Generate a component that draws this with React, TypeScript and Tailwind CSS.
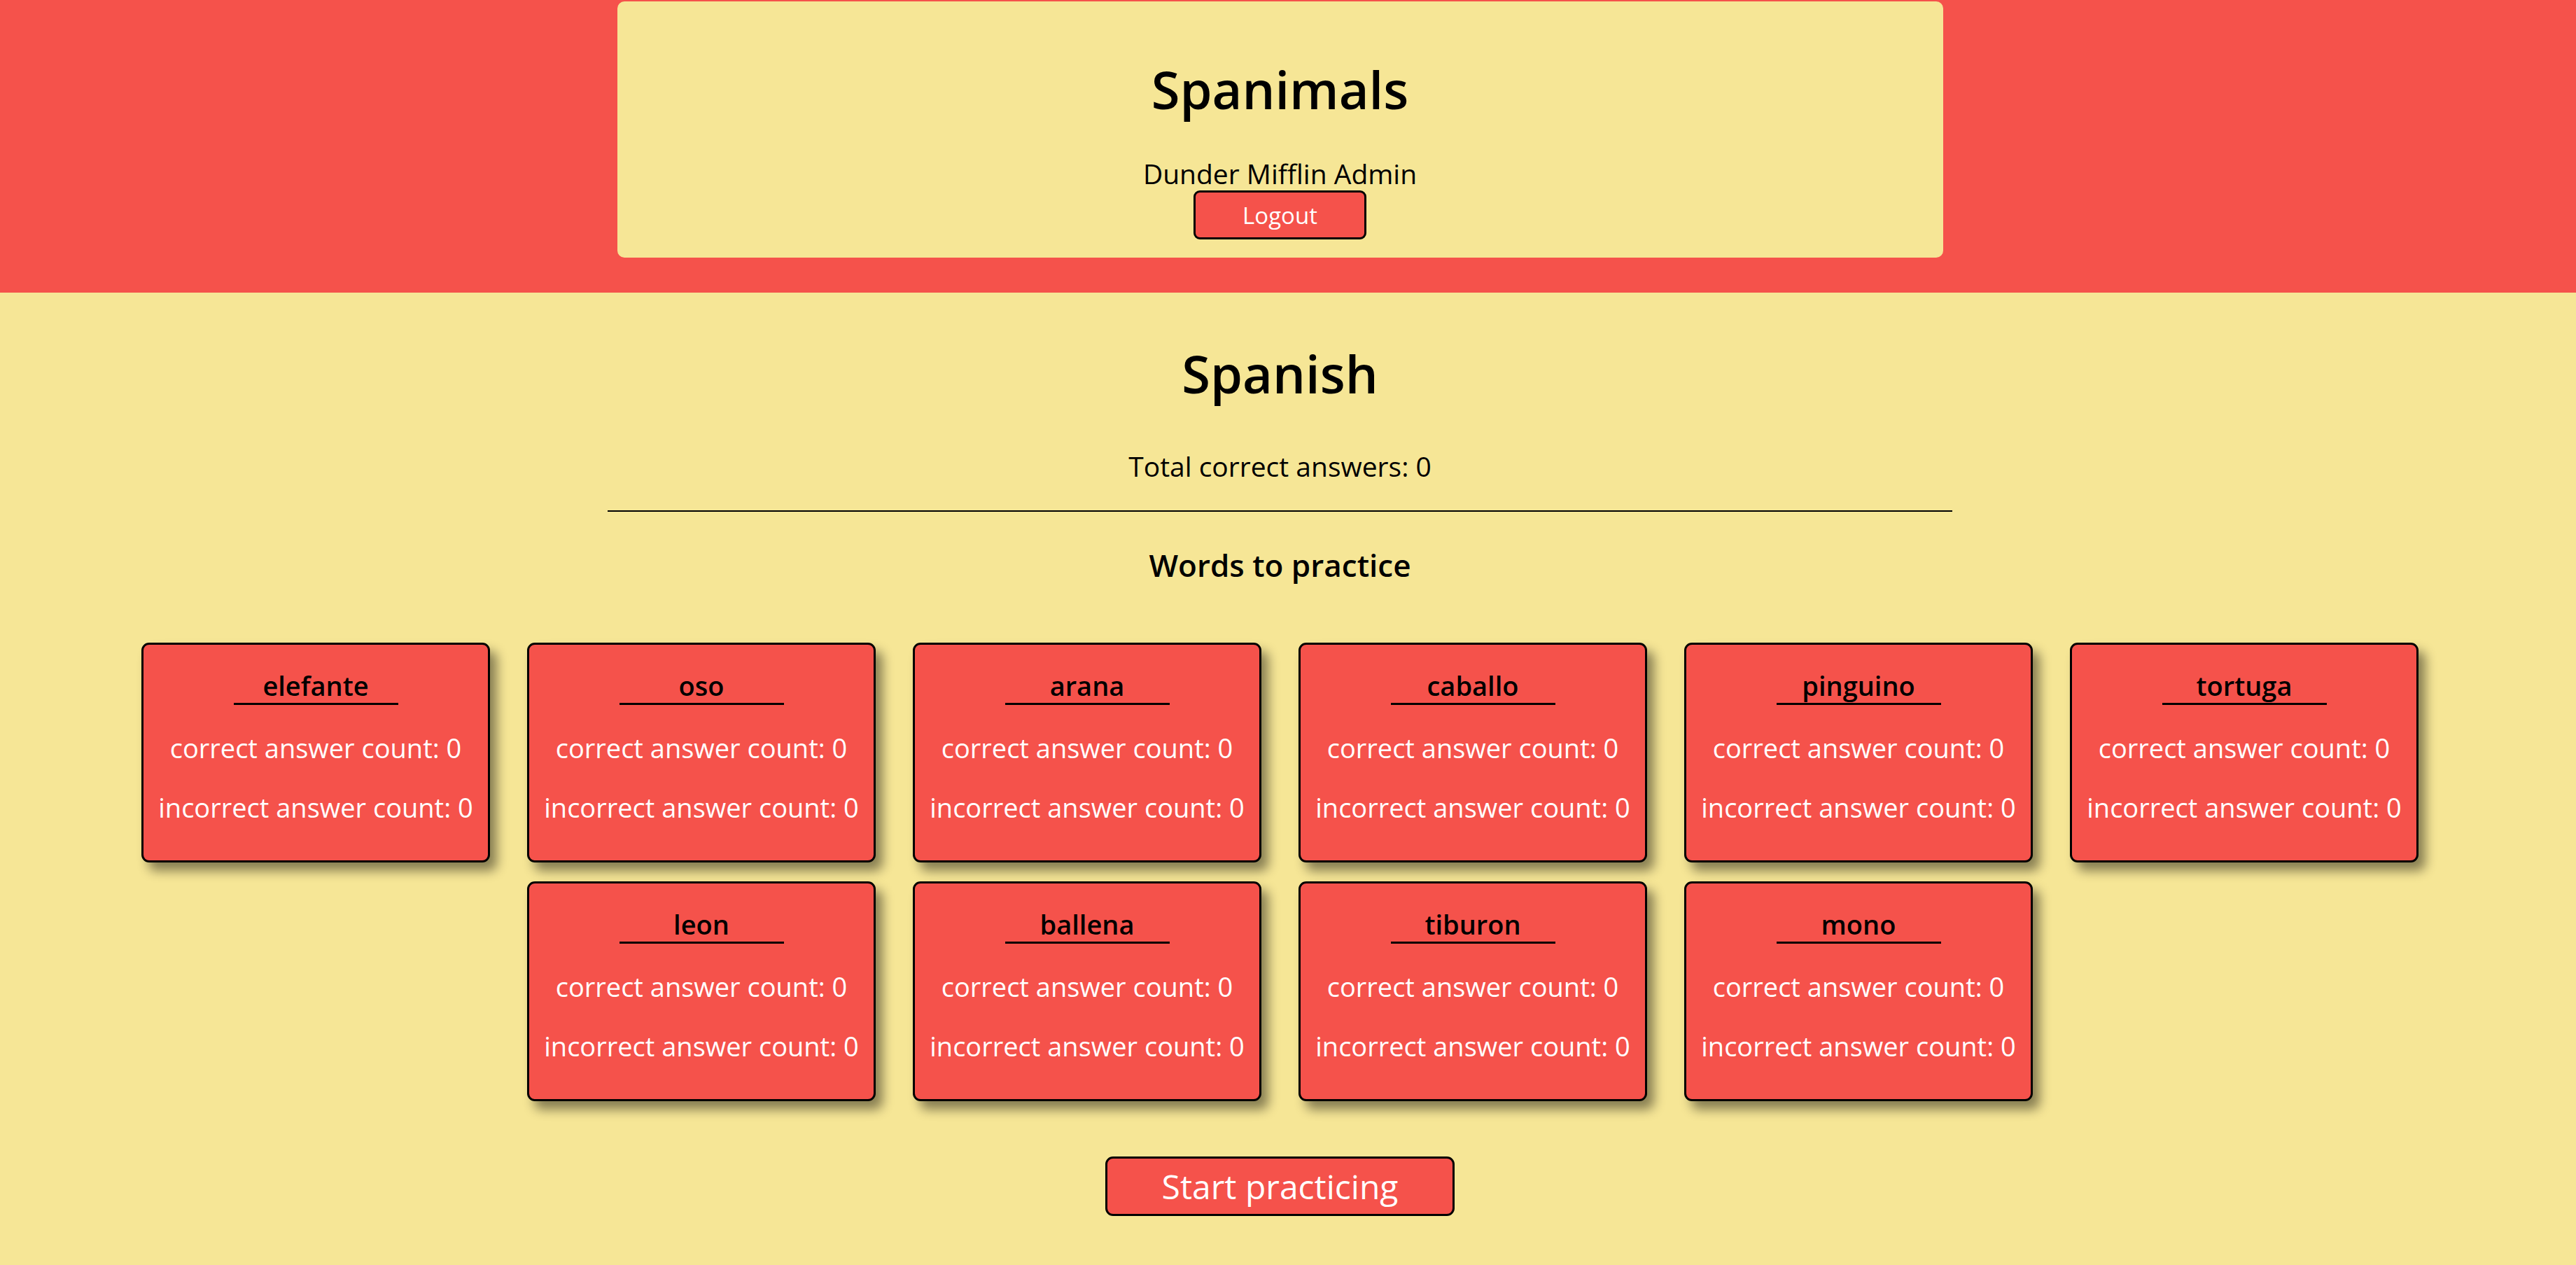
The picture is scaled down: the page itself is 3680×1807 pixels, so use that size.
import React from "react";

const words = [
  "elefante",
  "oso",
  "arana",
  "caballo",
  "pinguino",
  "tortuga",
  "leon",
  "ballena",
  "tiburon",
  "mono",
];

const WordCard = ({ word }: { word: string }) => {
  return (
    <div className="w-[498px] h-[314px] bg-[#f5524b] border-[3px] border-black rounded-[11px] shadow-[10px_12px_16px_rgba(0,0,0,0.45)] pt-[39px] flex flex-col items-center">
      <h4 className="w-[235px] border-b-[3px] border-black pb-[6px] text-center text-[38px] leading-none font-semibold text-black">
        {word}
      </h4>
      <p className="mt-[42px] text-[38px] leading-none text-white">
        correct answer count: 0
      </p>
      <p className="mt-[47px] text-[38px] leading-none text-white">
        incorrect answer count: 0
      </p>
    </div>
  );
};

const App = () => {
  return (
    <div className="min-h-screen bg-[#f6e696] font-['Open_Sans',sans-serif] text-black">
      <header className="bg-[#f5524b] h-[418px] pt-[2px] pr-[23px]">
        <div className="w-[1894px] h-[366px] mx-auto bg-[#f6e696] rounded-[10px] flex flex-col items-center pt-[89px]">
          <h1 className="text-[74px] leading-none font-semibold">Spanimals</h1>
          <div className="mt-[63px] text-[39px] leading-none">
            Dunder Mifflin Admin
          </div>
          <button className="mt-[5px] w-[247px] h-[70px] bg-[#f5524b] border-[3px] border-black rounded-[9px] text-white text-[33px] leading-none flex items-center justify-center">
            Logout
          </button>
        </div>
      </header>

      <main className="pr-[23px] pb-[71px] flex flex-col items-center">
        <h2 className="mt-[79px] text-[74px] leading-none font-semibold">
          Spanish
        </h2>
        <p className="mt-[75px] text-[39px] leading-none">
          Total correct answers: 0
        </p>
        <hr className="mt-[44px] w-[1921px] border-0 border-t-2 border-black" />
        <h3 className="mt-[54px] text-[44px] leading-none font-semibold">
          Words to practice
        </h3>
        <div className="mt-[89px] w-[3260px] flex flex-wrap justify-center gap-x-[53px] gap-y-[27px]">
          {words.map((w) => (
            <WordCard key={w} word={w} />
          ))}
        </div>
        <button className="mt-[79px] w-[499px] h-[85px] bg-[#f5524b] border-[3px] border-black rounded-[11px] text-white text-[48px] leading-none flex items-center justify-center">
          Start practicing
        </button>
      </main>
    </div>
  );
};

export default App;
